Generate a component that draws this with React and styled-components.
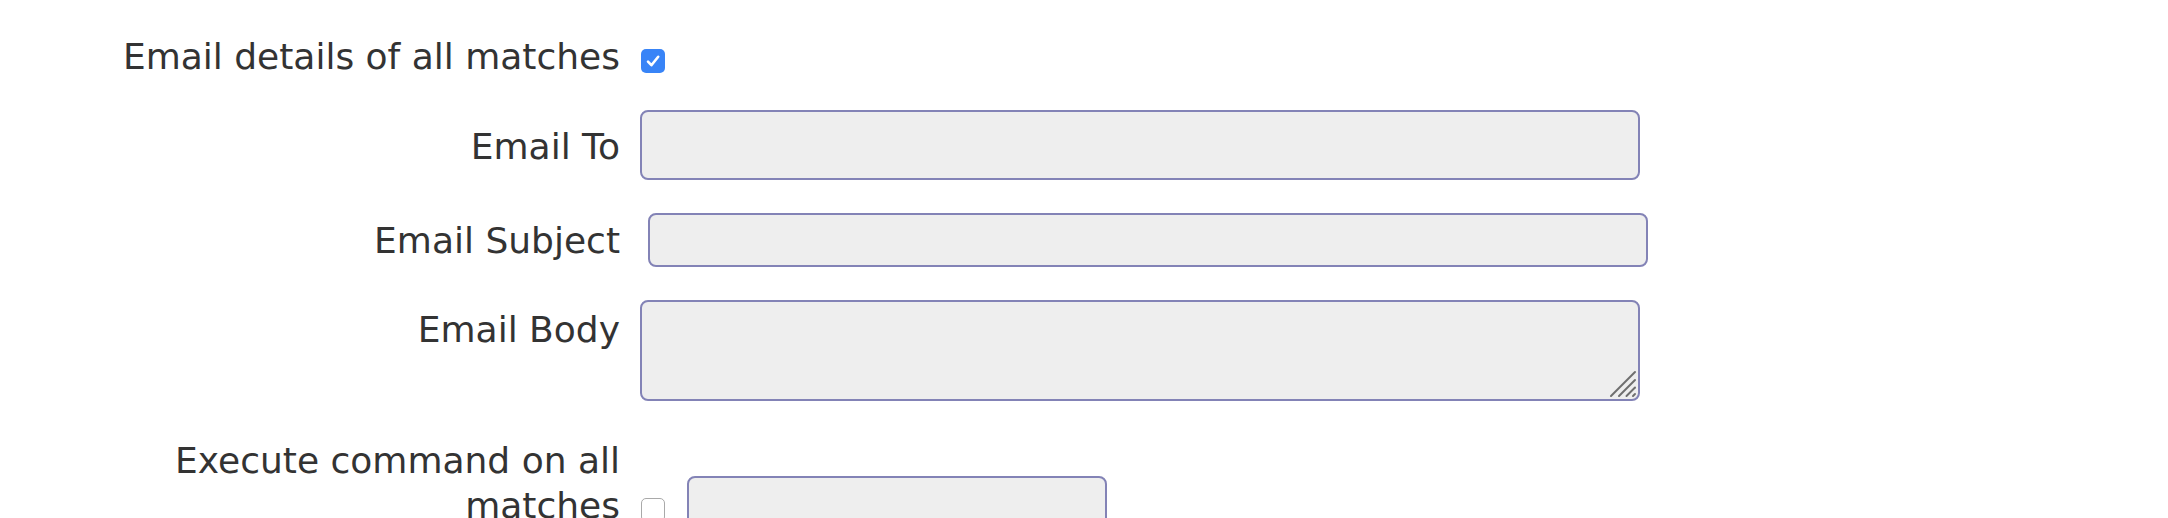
import React from "react";
import styled, { createGlobalStyle } from "styled-components";

const GlobalStyle = createGlobalStyle`
  html, body {
    margin: 0;
    padding: 0;
    background: #ffffff;
    overflow: hidden;
  }
  body {
    font-family: "DejaVu Sans", Verdana, sans-serif;
    color: #333333;
  }
`;

const Form = styled.form`
  display: flex;
  flex-direction: column;
  padding: 34px 0 0 120px;
`;

const Row = styled.div`
  display: grid;
  grid-template-columns: 500px auto;
  column-gap: 20px;
  align-items: ${(p) => p.$align || "start"};
  margin-top: ${(p) => p.$gap || 0}px;
`;

const Label = styled.label`
  font-size: 36px;
  line-height: 45px;
  text-align: right;
  padding-top: ${(p) => p.$offset || 0}px;
  color: #333333;
`;

const Field = styled.div`
  display: flex;
  align-items: flex-start;
  gap: 22px;
`;

const TextInput = styled.input`
  box-sizing: border-box;
  width: ${(p) => p.$width || 1000}px;
  height: ${(p) => p.$height || 54}px;
  margin: 0 0 0 ${(p) => p.$shift || 0}px;
  margin-top: ${(p) => p.$top || 0}px;
  background: #eeeeee;
  border: 2px solid #8383b6;
  border-radius: 8px;
  outline: none;
  font-family: "DejaVu Sans", sans-serif;
  font-size: 26px;
  padding: 0 10px;
`;

const AreaWrap = styled.div`
  position: relative;
  width: 1000px;
  height: 101px;
`;

const TextArea = styled.textarea`
  box-sizing: border-box;
  width: 1000px;
  height: 101px;
  margin: 0;
  background: #eeeeee;
  border: 2px solid #8383b6;
  border-radius: 8px;
  outline: none;
  font-family: "DejaVu Sans", sans-serif;
  font-size: 26px;
  padding: 6px 10px;
  resize: none;
  display: block;
`;

const Grip = styled.svg`
  position: absolute;
  right: 3px;
  bottom: 3px;
  pointer-events: none;
`;

const BoxWrap = styled.span`
  position: relative;
  display: inline-block;
  width: 24px;
  height: 24px;
  margin-left: 1px;
  margin-top: ${(p) => p.$top || 0}px;
  flex: none;
`;

const BoxInput = styled.input`
  appearance: none;
  -webkit-appearance: none;
  box-sizing: border-box;
  width: 24px;
  height: 24px;
  margin: 0;
  border-radius: 5px;
  display: block;
  background: ${(p) => (p.checked ? "#3884f7" : "#ffffff")};
  border: ${(p) => (p.checked ? "none" : "1.5px solid #a9a9a9")};
`;

const Tick = styled.svg`
  position: absolute;
  left: 0;
  top: 0;
  pointer-events: none;
`;

function CheckBox({ checked, top }) {
  return (
    <BoxWrap $top={top}>
      <BoxInput type="checkbox" checked={checked} readOnly />
      {checked && (
        <Tick width="24" height="24" viewBox="0 0 24 24">
          <path
            d="M7 12.6 L10.4 16.2 L17.2 7.8"
            fill="none"
            stroke="#ffffff"
            strokeWidth="2.6"
            strokeLinecap="round"
            strokeLinejoin="round"
          />
        </Tick>
      )}
    </BoxWrap>
  );
}

export default function App() {
  return (
    <>
      <GlobalStyle />
      <Form onSubmit={(e) => e.preventDefault()}>
        <Row>
          <Label>Email details of all matches</Label>
          <Field>
            <CheckBox checked top={15} />
          </Field>
        </Row>
        <Row $align="center" $gap={31}>
          <Label $offset={3}>Email To</Label>
          <Field>
            <TextInput type="text" $height={70} />
          </Field>
        </Row>
        <Row $align="center" $gap={33}>
          <Label $offset={1}>Email Subject</Label>
          <Field>
            <TextInput type="text" $height={54} $shift={8} />
          </Field>
        </Row>
        <Row $gap={33}>
          <Label $offset={7}>Email Body</Label>
          <Field>
            <AreaWrap>
              <TextArea />
              <Grip width="28" height="28" viewBox="0 0 28 28">
                <g stroke="#6e6e6e" strokeWidth="2" strokeLinecap="round">
                  <line x1="2" y1="26" x2="26" y2="2" />
                  <line x1="10" y1="26" x2="26" y2="10" />
                  <line x1="17.5" y1="26" x2="26" y2="17.5" />
                  <line x1="24" y1="26" x2="26" y2="24" />
                </g>
              </Grip>
            </AreaWrap>
          </Field>
        </Row>
        <Row $gap={37}>
          <Label>Execute command on all matches</Label>
          <Field>
            <CheckBox top={60} />
            <TextInput type="text" $width={420} $height={54} $top={38} />
          </Field>
        </Row>
      </Form>
    </>
  );
}
